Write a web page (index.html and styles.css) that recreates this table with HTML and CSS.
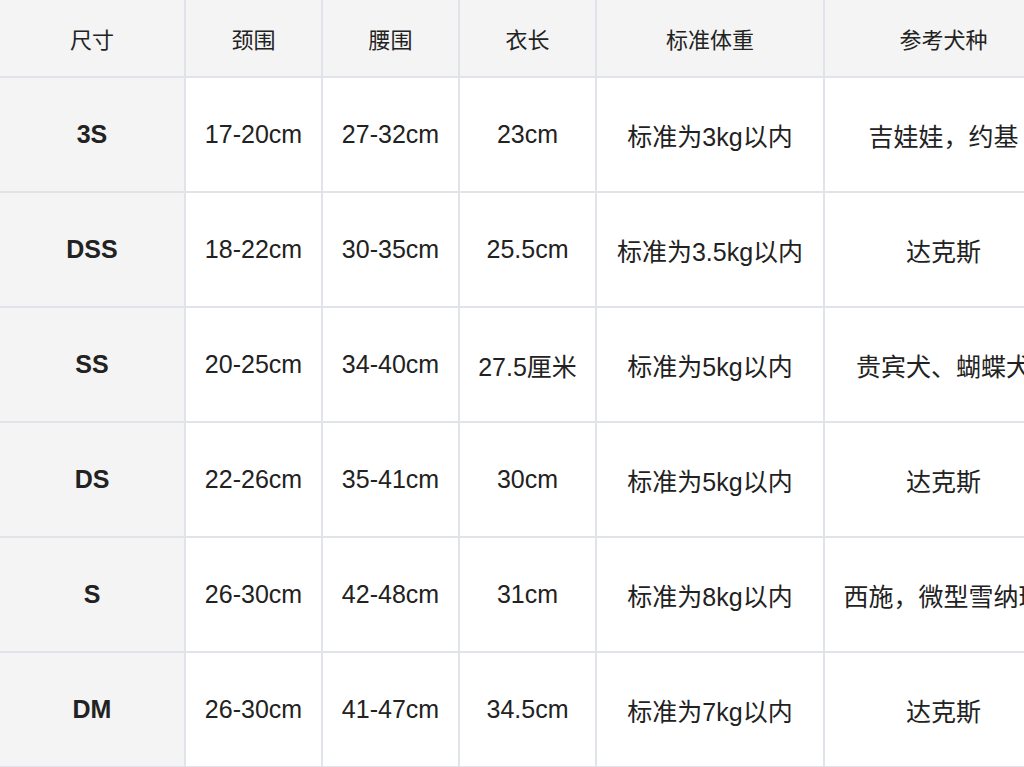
FILE: index.html
```html
<!DOCTYPE html>
<html lang="zh">
<head>
<meta charset="utf-8">
<title>尺寸表</title>
<link rel="stylesheet" href="styles.css">
</head>
<body>
<div class="wrap">
<table class="size-table">
  <colgroup>
    <col class="c1"><col class="c2"><col class="c3"><col class="c4"><col class="c5"><col class="c6">
  </colgroup>
  <thead>
    <tr><th>尺寸</th><th>颈围</th><th>腰围</th><th>衣长</th><th>标准体重</th><th>参考犬种</th></tr>
  </thead>
  <tbody>
    <tr><td class="size">3S</td><td>17-20cm</td><td>27-32cm</td><td>23cm</td><td>标准为3kg以内</td><td>吉娃娃，约基</td></tr>
    <tr><td class="size">DSS</td><td>18-22cm</td><td>30-35cm</td><td>25.5cm</td><td>标准为3.5kg以内</td><td>达克斯</td></tr>
    <tr><td class="size">SS</td><td>20-25cm</td><td>34-40cm</td><td>27.5厘米</td><td>标准为5kg以内</td><td>贵宾犬、蝴蝶犬</td></tr>
    <tr><td class="size">DS</td><td>22-26cm</td><td>35-41cm</td><td>30cm</td><td>标准为5kg以内</td><td>达克斯</td></tr>
    <tr><td class="size">S</td><td>26-30cm</td><td>42-48cm</td><td>31cm</td><td>标准为8kg以内</td><td>西施，微型雪纳瑞</td></tr>
    <tr><td class="size">DM</td><td>26-30cm</td><td>41-47cm</td><td>34.5cm</td><td>标准为7kg以内</td><td>达克斯</td></tr>
  </tbody>
</table>
</div>
</body>
</html>
```
FILE: styles.css
```css
html, body {
  margin: 0;
  padding: 0;
  background: #ffffff;
}
.wrap {
  width: 1024px;
  height: 767px;
  overflow: hidden;
}
.size-table {
  border-collapse: separate;
  border-spacing: 0;
  table-layout: fixed;
  width: 1064px;
  font-family: "Liberation Sans", "Noto Sans CJK SC", sans-serif;
  color: #222222;
}
.c1 { width: 186px; }
.c2 { width: 137px; }
.c3 { width: 137px; }
.c4 { width: 137px; }
.c5 { width: 228px; }
.c6 { width: 239px; }
.size-table th,
.size-table td {
  padding: 0;
  text-align: center;
  vertical-align: middle;
  white-space: nowrap;
  overflow: hidden;
  border-right: 2px solid #e0e4e9;
  border-bottom: 2px solid #e0e4e9;
  box-sizing: border-box;
}
.size-table th {
  height: 78px;
  background: #f4f4f4;
  font-size: 22px;
  font-weight: normal;
}
.size-table td {
  height: 115px;
  font-size: 25px;
}
.size-table td.size {
  background: #f4f4f4;
  font-weight: bold;
}
```
